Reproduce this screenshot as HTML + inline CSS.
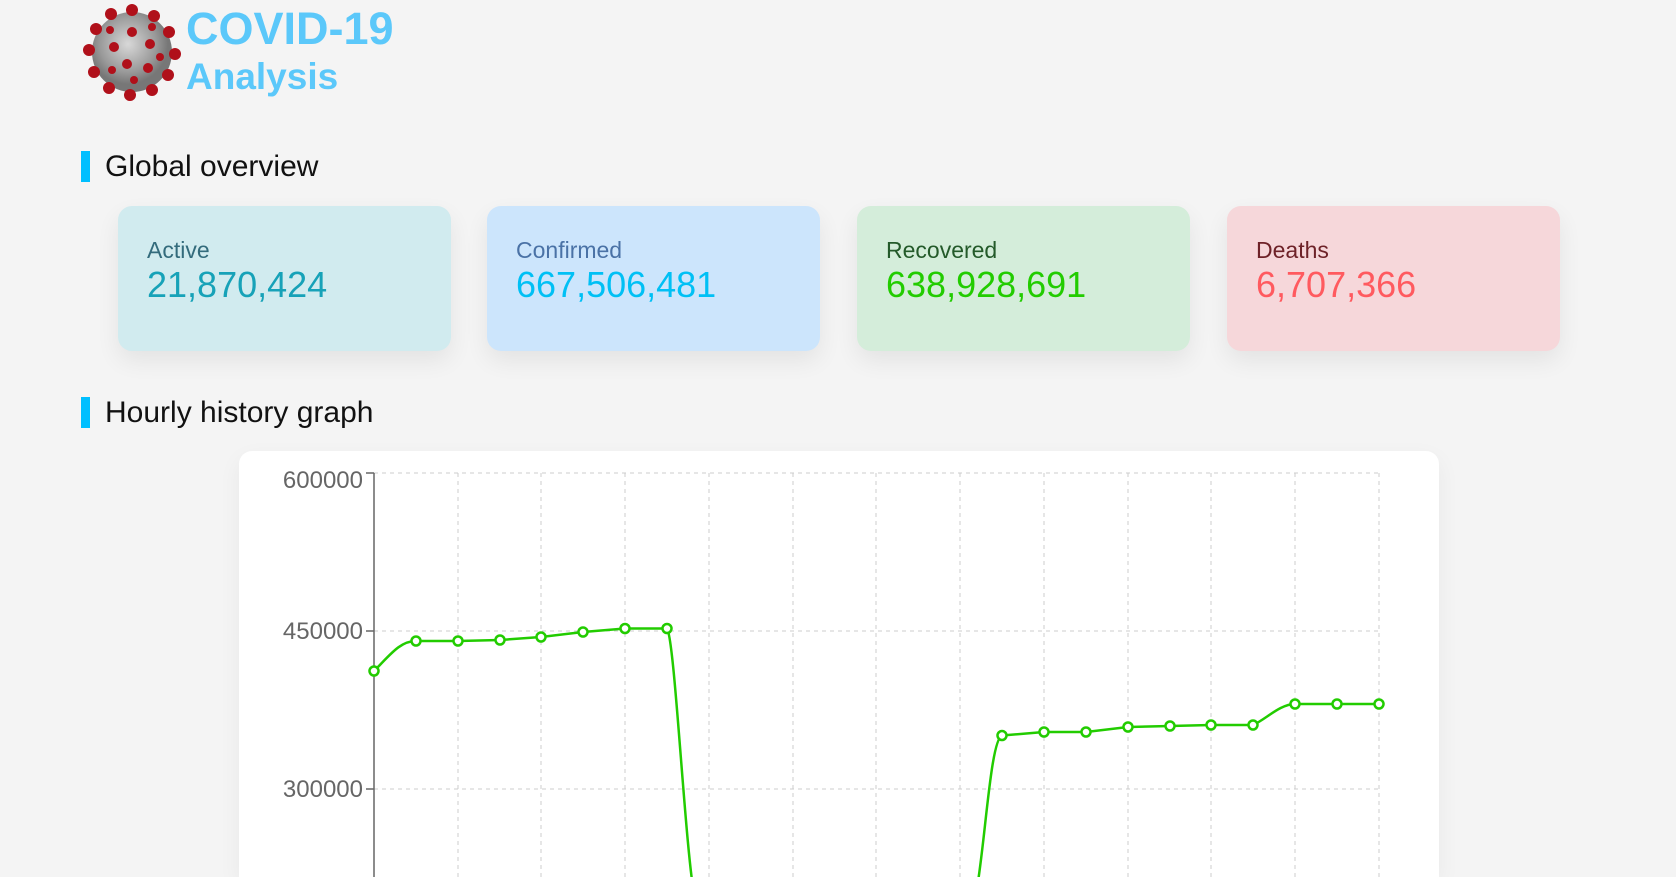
<!DOCTYPE html>
<html style="width:1676px;height:877px;overflow:hidden"><head><meta charset="utf-8"><style>
*{margin:0;padding:0;box-sizing:border-box}
body{width:1676px;height:877px;overflow:hidden;background:#f4f4f4;font-family:"Liberation Sans",Arial,sans-serif;position:relative}
.abs{position:absolute}
.t1{left:186px;top:3px;font-size:45px;font-weight:bold;color:#5bc8fa;line-height:52px}
.t2{left:186px;top:55px;font-size:37px;font-weight:bold;color:#5bc8fa;line-height:44px}
.sec{position:absolute;left:81px;height:31px;border-left:9px solid #00bfff;padding-left:15px;font-size:30px;line-height:31px;color:#111}
.card{position:absolute;top:206px;width:333px;height:145px;border-radius:14px;box-shadow:0 10px 24px rgba(0,0,0,0.07)}
.card .l{position:absolute;left:29px;top:31px;font-size:23px}
.card .n{position:absolute;left:29px;top:58px;font-size:36px}
.chart{position:absolute;left:239px;top:451px;width:1200px;height:426px;background:#fff;border-radius:13px 13px 0 0;box-shadow:0 8px 24px rgba(0,0,0,0.05)}
</style></head><body>
<svg class="abs" style="left:82px;top:2px" width="100" height="100" viewBox="0 0 100 100">
<defs><radialGradient id="g" cx="45%" cy="40%"><stop offset="0" stop-color="#d8d8d8"/><stop offset="0.7" stop-color="#9a9a9a"/><stop offset="1" stop-color="#777"/></radialGradient></defs>
<circle cx="50" cy="50" r="40" fill="url(#g)"/>
<g fill="#b0101a">
<circle cx="50" cy="8" r="6"/><circle cx="72" cy="14" r="6"/><circle cx="87" cy="30" r="6"/><circle cx="93" cy="52" r="6"/><circle cx="86" cy="73" r="6"/><circle cx="70" cy="88" r="6"/><circle cx="48" cy="93" r="6"/><circle cx="27" cy="86" r="6"/><circle cx="12" cy="70" r="6"/><circle cx="7" cy="48" r="6"/><circle cx="14" cy="27" r="6"/><circle cx="29" cy="12" r="6"/>
<circle cx="50" cy="30" r="5"/><circle cx="32" cy="45" r="5"/><circle cx="68" cy="42" r="5"/><circle cx="45" cy="62" r="5"/><circle cx="66" cy="66" r="5"/><circle cx="30" cy="68" r="4"/><circle cx="70" cy="25" r="4"/><circle cx="28" cy="28" r="4"/><circle cx="52" cy="78" r="4"/><circle cx="78" cy="55" r="4"/>
</g></svg>
<div class="abs t1">COVID-19</div>
<div class="abs t2">Analysis</div>
<div class="sec" style="top:151px">Global overview</div>
<div class="card" style="left:118px;background:#d1ebef"><div class="l" style="color:#336b7c">Active</div><div class="n" style="color:#17a2b8">21,870,424</div></div>
<div class="card" style="left:487px;background:#cce5fc"><div class="l" style="color:#4a72a6">Confirmed</div><div class="n" style="color:#00c0f5">667,506,481</div></div>
<div class="card" style="left:857px;background:#d4edda"><div class="l" style="color:#245a2a">Recovered</div><div class="n" style="color:#22cc00">638,928,691</div></div>
<div class="card" style="left:1227px;background:#f6d7da"><div class="l" style="color:#6e2228">Deaths</div><div class="n" style="color:#ff5a5f">6,707,366</div></div>
<div class="sec" style="top:397px">Hourly history graph</div>
<div class="chart"></div>
<svg class="abs" style="left:0;top:0" width="1676" height="877">
<g stroke="#ccc" stroke-dasharray="4,4" stroke-width="1">
<line x1="374" y1="473" x2="1379" y2="473"/><line x1="374" y1="631" x2="1379" y2="631"/><line x1="374" y1="789" x2="1379" y2="789"/>
<line x1="458" y1="473" x2="458" y2="877"/><line x1="541" y1="473" x2="541" y2="877"/><line x1="625" y1="473" x2="625" y2="877"/><line x1="709" y1="473" x2="709" y2="877"/><line x1="793" y1="473" x2="793" y2="877"/><line x1="876" y1="473" x2="876" y2="877"/><line x1="960" y1="473" x2="960" y2="877"/><line x1="1044" y1="473" x2="1044" y2="877"/><line x1="1128" y1="473" x2="1128" y2="877"/><line x1="1211" y1="473" x2="1211" y2="877"/><line x1="1295" y1="473" x2="1295" y2="877"/><line x1="1379" y1="473" x2="1379" y2="877"/>
</g>
<g stroke="#666" stroke-width="1.5"><line x1="374" y1="473" x2="374" y2="877"/><line x1="366" y1="473" x2="374" y2="473"/><line x1="366" y1="631" x2="374" y2="631"/><line x1="366" y1="789" x2="374" y2="789"/></g>
<g font-family="Liberation Sans,Arial,sans-serif" font-size="24" fill="#666" text-anchor="end">
<text x="363" y="488">600000</text><text x="363" y="639">450000</text><text x="363" y="797">300000</text></g>
<path d="M374,671 C390,655 400,641 416,641 L458,641 L500,640 L541,637 L583,632 L625,628.5 L667,628.5 C675,640 685,850 695,900 M975,900 C985,850 990,740 1002,735.5 L1044,732 L1086,732 L1128,727 L1170,726 L1211,725 L1253,725 C1265,720 1280,704 1295,704 L1337,704 L1379,704" fill="none" stroke="#22cc00" stroke-width="2.5"/>
<g fill="#fff" stroke="#22cc00" stroke-width="2.5">
<circle cx="374" cy="671" r="4.5"/><circle cx="416" cy="641" r="4.5"/><circle cx="458" cy="641" r="4.5"/><circle cx="500" cy="640" r="4.5"/><circle cx="541" cy="637" r="4.5"/><circle cx="583" cy="632" r="4.5"/><circle cx="625" cy="628.5" r="4.5"/><circle cx="667" cy="628.5" r="4.5"/>
<circle cx="1002" cy="735.5" r="4.5"/><circle cx="1044" cy="732" r="4.5"/><circle cx="1086" cy="732" r="4.5"/><circle cx="1128" cy="727" r="4.5"/><circle cx="1170" cy="726" r="4.5"/><circle cx="1211" cy="725" r="4.5"/><circle cx="1253" cy="725" r="4.5"/><circle cx="1295" cy="704" r="4.5"/><circle cx="1337" cy="704" r="4.5"/><circle cx="1379" cy="704" r="4.5"/>
</g></svg>
</body></html>
